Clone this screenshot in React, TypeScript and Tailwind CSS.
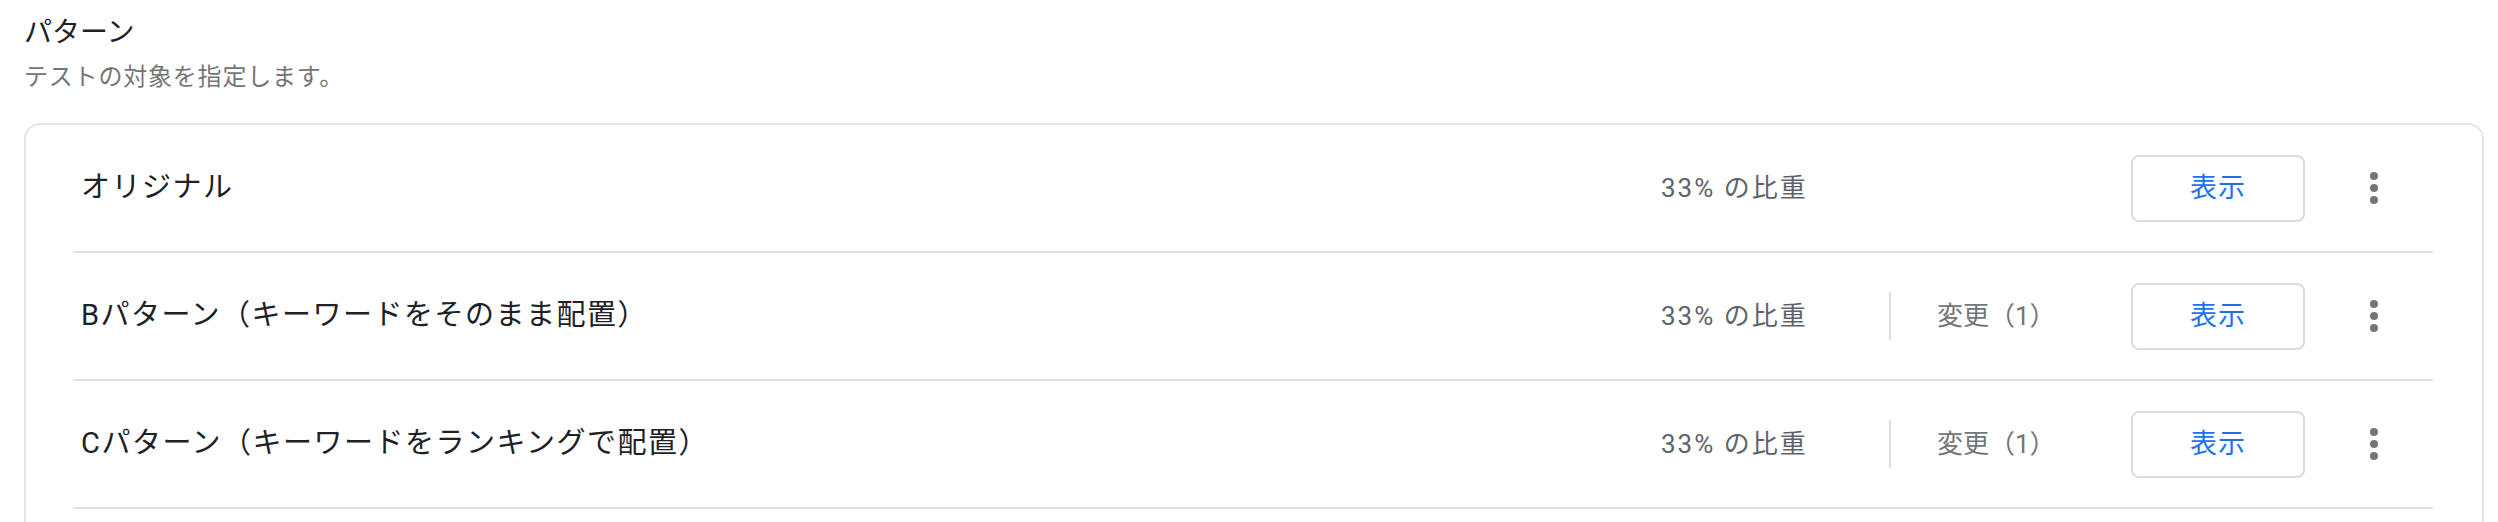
import React from "react";

const FONT = { fontFamily: 'Roboto, "Noto Sans CJK JP", "Noto Sans", sans-serif' };

type Row = { name: string; change?: string };

const rows: Row[] = [
  { name: "オリジナル" },
  { name: "Bパターン（キーワードをそのまま配置）", change: "変更（1）" },
  { name: "Cパターン（キーワードをランキングで配置）", change: "変更（1）" },
];

function Kebab() {
  return (
    <svg width="10" height="34" viewBox="0 0 10 34" aria-hidden="true">
      <circle cx="5" cy="5" r="4" fill="#757575" />
      <circle cx="5" cy="17" r="4" fill="#757575" />
      <circle cx="5" cy="29" r="4" fill="#757575" />
    </svg>
  );
}

export default function App() {
  return (
    <div className="w-[2498px] bg-white pl-[24px] pr-[14px] pt-[15px]" style={FONT}>
      <div className="text-[28px] leading-[36px] text-[#202124]">パターン</div>
      <div className="mt-[10px] text-[24px] leading-[32px] tracking-[0.8px] text-[#757575]">テストの対象を指定します。</div>
      <div className="mt-[30px] w-[2460px] rounded-[16px] border-2 border-[#e3e3e3] pl-[47px] pr-[49px] pb-[40px]">
        {rows.map((r) => (
          <div key={r.name} className="flex h-[128px] items-center border-b-2 border-[#e0e0e0]">
            <div className="flex-1 pl-[8px] text-[29px] tracking-[1.5px] text-[#202124]">{r.name}</div>
            <div className="w-[228px] text-[26px] tracking-[2px] text-[#5f6368]">33% の比重</div>
            <div className="flex w-[242px] items-center">
              {r.change ? (
                <>
                  <div className="h-[48px] w-[2px] bg-[#e0e0e0]" />
                  <div className="pl-[46px] text-[26px] text-[#757575]">{r.change}</div>
                </>
              ) : null}
            </div>
            <button className="flex h-[67px] w-[174px] items-center justify-center rounded-[8px] border-2 border-[#dadce0] bg-white text-[27px] tracking-[1px] text-[#1a73e8]">
              表示
            </button>
            <div className="flex w-[128px]">
              <div className="ml-[45px] flex h-[48px] w-[48px] items-center justify-center">
                <Kebab />
              </div>
            </div>
          </div>
        ))}
      </div>
    </div>
  );
}
